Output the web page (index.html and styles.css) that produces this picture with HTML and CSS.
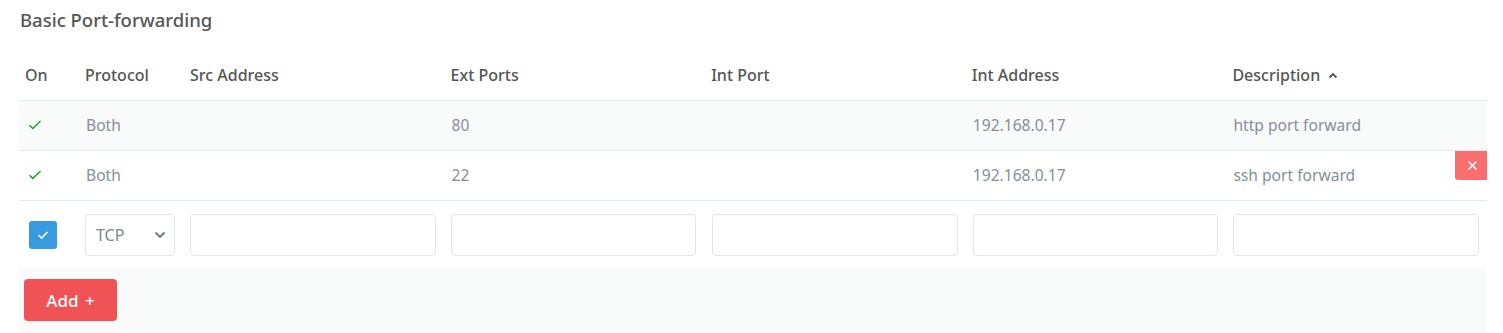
FILE: index.html
```html
<!DOCTYPE html>
<html lang="en">
<head>
    <meta charset="UTF-8">
    <meta name="viewport" content="width=device-width, initial-scale=1.0">
    <title>Basic Port-forwarding</title>
    <link rel="stylesheet" href="styles.css">
</head>
<body>
    <div class="panel">
        <h2 class="titulo">Basic Port-forwarding</h2>
        <div class="tabela">
            <div class="linha cabecalho">
                <div class="celula">On</div>
                <div class="celula">Protocol</div>
                <div class="celula">Src Address</div>
                <div class="celula">Ext Ports</div>
                <div class="celula">Int Port</div>
                <div class="celula">Int Address</div>
                <div class="celula">Description
                    <svg class="seta-ordem" width="10" height="7" viewBox="0 0 10 7"><path d="M1.5 5.5L5 2l3.5 3.5" fill="none" stroke="#555" stroke-width="1.8"/></svg>
                </div>
            </div>
            <div class="linha dados impar">
                <div class="celula"><svg width="14" height="10" viewBox="0 0 14 10"><path d="M1.5 5.2l3.3 3.3L12.5 1" fill="none" stroke="#1d9a23" stroke-width="1.4"/></svg></div>
                <div class="celula">Both</div>
                <div class="celula"></div>
                <div class="celula">80</div>
                <div class="celula"></div>
                <div class="celula">192.168.0.17</div>
                <div class="celula">http port forward</div>
            </div>
            <div class="linha dados">
                <div class="celula"><svg width="14" height="10" viewBox="0 0 14 10"><path d="M1.5 5.2l3.3 3.3L12.5 1" fill="none" stroke="#1d9a23" stroke-width="1.4"/></svg></div>
                <div class="celula">Both</div>
                <div class="celula"></div>
                <div class="celula">22</div>
                <div class="celula"></div>
                <div class="celula">192.168.0.17</div>
                <div class="celula">ssh port forward</div>
                <button class="btn-remover" title="Remove">
                    <svg width="11" height="11" viewBox="0 0 11 11"><path d="M1.5 1.5l8 8M9.5 1.5l-8 8" stroke="#fff" stroke-width="1.7"/></svg>
                </button>
            </div>
            <div class="linha novo">
                <div class="celula">
                    <span class="caixa-marcada"><svg width="14" height="10" viewBox="0 0 14 10"><path d="M2.5 5l3 3L11.5 2" fill="none" stroke="#fff" stroke-width="1.6"/></svg></span>
                </div>
                <div class="celula">
                    <div class="seletor">
                        <select>
                            <option>TCP</option>
                            <option>UDP</option>
                            <option>Both</option>
                        </select>
                        <svg class="seta-seletor" width="12" height="8" viewBox="0 0 12 8"><path d="M1.5 1.5L6 6l4.5-4.5" fill="none" stroke="#6b7680" stroke-width="1.8"/></svg>
                    </div>
                </div>
                <div class="celula"><input type="text"></div>
                <div class="celula"><input type="text"></div>
                <div class="celula"><input type="text"></div>
                <div class="celula"><input type="text"></div>
                <div class="celula"><input type="text"></div>
            </div>
            <div class="rodape">
                <button class="btn-add">Add +</button>
            </div>
        </div>
    </div>
</body>
</html>
```

FILE: styles.css
```css
body {
    font-family: "Noto Sans", "Open Sans", sans-serif;
    margin: 0;
    background-color: #fff;
}

.panel {
    margin: 0 16px 0 19px;
}

.titulo {
    margin: 0;
    height: 50px;
    line-height: 40px;
    padding-left: 1px;
    font-size: 18.5px;
    font-weight: 500;
    color: #555;
}

.linha {
    display: grid;
    grid-template-columns: 60px 105px repeat(5, 1fr);
    align-items: center;
    position: relative;
}

.celula {
    padding: 0 8px 0 7px;
    font-size: 15.6px;
}

.cabecalho {
    height: 50px;
    border-bottom: 1px solid #e4e9ec;
    color: #555;
    font-weight: 500;
}

.cabecalho .celula {
    font-size: 16px;
    padding-left: 6px;
}

.seta-ordem {
    margin-left: 4px;
    vertical-align: 2px;
}

.dados {
    height: 49px;
    border-bottom: 1px solid #e4e9ec;
    color: #858f99;
}

.dados .celula {
    padding-bottom: 2px;
}

.dados svg {
    display: block;
    margin-left: 2px;
}

.impar {
    background-color: #f9fafa;
}

.btn-remover {
    position: absolute;
    right: 0;
    top: 0;
    width: 32px;
    height: 29px;
    border: none;
    padding: 0;
    background-color: #f96e6e;
    border-radius: 0 0 0 3px;
    display: flex;
    align-items: center;
    justify-content: center;
    cursor: pointer;
}

.novo {
    height: 67px;
}

.novo .celula {
    padding: 0 9px 0 6px;
}

.novo .celula:nth-child(n+5) {
    padding: 0 8px 0 7px;
}

.caixa-marcada {
    display: flex;
    width: 28px;
    height: 28px;
    margin-left: 4px;
    background-color: #3a9ae0;
    border-radius: 3px;
    align-items: center;
    justify-content: center;
}

.seletor {
    position: relative;
}

.seletor select {
    appearance: none;
    width: 100%;
    height: 42px;
    padding: 0 10px;
    border: 1px solid #e3e6e8;
    border-radius: 4px;
    background: #fff;
    font-family: inherit;
    font-size: 16px;
    color: #7d8790;
}

.seta-seletor {
    position: absolute;
    right: 9px;
    top: 17px;
    pointer-events: none;
}

input[type="text"] {
    box-sizing: border-box;
    width: 100%;
    height: 42px;
    border: 1px solid #e3e6e8;
    border-radius: 4px;
    font-family: inherit;
    font-size: 15px;
}

.rodape {
    background-color: #f9fbfb;
    height: 65px;
    padding: 11px 0 0 5px;
    box-sizing: border-box;
}

.btn-add {
    width: 93px;
    height: 42px;
    border: none;
    border-radius: 4px;
    background-color: #ef5356;
    color: #fff;
    font-family: inherit;
    font-size: 17px;
    font-weight: 500;
    word-spacing: 2px;
    cursor: pointer;
}
```
